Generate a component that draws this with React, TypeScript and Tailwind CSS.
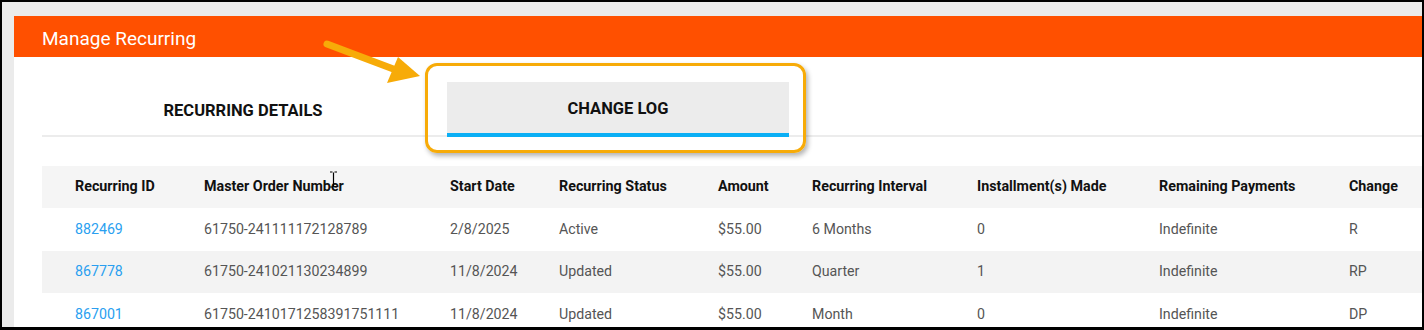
import React from 'react';

type Row = {
  id: string;
  order: string;
  start: string;
  status: string;
  amount: string;
  interval: string;
  made: string;
  remaining: string;
  change: string;
};

const COLUMNS = [
  'Recurring ID',
  'Master Order Number',
  'Start Date',
  'Recurring Status',
  'Amount',
  'Recurring Interval',
  'Installment(s) Made',
  'Remaining Payments',
  'Change',
];

const ROWS: Row[] = [
  {
    id: '882469',
    order: '61750-241111172128789',
    start: '2/8/2025',
    status: 'Active',
    amount: '$55.00',
    interval: '6 Months',
    made: '0',
    remaining: 'Indefinite',
    change: 'R',
  },
  {
    id: '867778',
    order: '61750-241021130234899',
    start: '11/8/2024',
    status: 'Updated',
    amount: '$55.00',
    interval: 'Quarter',
    made: '1',
    remaining: 'Indefinite',
    change: 'RP',
  },
  {
    id: '867001',
    order: '61750-2410171258391751111',
    start: '11/8/2024',
    status: 'Updated',
    amount: '$55.00',
    interval: 'Month',
    made: '0',
    remaining: 'Indefinite',
    change: 'DP',
  },
];

const GRID =
  'grid grid-cols-[129px_246px_109px_159px_94px_165px_182px_190px_1fr] items-center pl-[33px]';

export default function App() {
  return (
    <div
      className="relative w-[1424px] h-[330px] overflow-hidden bg-black pt-[2px] pl-[2px] pr-[2px] pb-[3px]"
      style={{ fontFamily: 'Roboto, "Liberation Sans", sans-serif' }}
    >
      <div className="h-full overflow-hidden bg-[#ebebeb] pt-[14px] pl-[12px]">
        <div className="h-full bg-white flex flex-col">
          {/* header bar */}
          <div className="h-[41px] shrink-0 bg-[#ff5000] flex items-center pl-[28px] pt-[3px]">
            <h1 className="text-white text-[19px] leading-none">Manage Recurring</h1>
          </div>

          <div className="pl-[28px] flex-1 flex flex-col">
            {/* tabs */}
            <div className="flex items-end gap-[33px] pl-[30px] pt-[25px] border-b-2 border-[#ececec]">
              <div className="w-[342px] h-[53px] pt-[5px] flex items-center justify-center text-[16.5px] font-bold text-[#111] uppercase">
                Recurring Details
              </div>
              <div className="w-[342px] h-[55px] -mb-[2px] pt-[3px] bg-[#ececec] border-b-4 border-[#0aaff5] flex items-center justify-center text-[16.5px] font-bold text-[#111] uppercase">
                Change Log
              </div>
            </div>

            {/* table */}
            <div className="mt-[29px]">
              <div className={`${GRID} h-[42px] bg-[#f5f5f5] text-[14.3px] font-bold text-[#111]`}>
                {COLUMNS.map((c) => (
                  <div key={c} className="whitespace-nowrap">
                    {c}
                  </div>
                ))}
              </div>
              {ROWS.map((r, i) => (
                <div
                  key={r.id}
                  className={`${GRID} h-[42.5px] text-[14.2px] text-[#555] ${i % 2 === 1 ? 'bg-[#f3f3f3]' : 'bg-white'}`}
                >
                  <div className="text-[#2a9ff0]">{r.id}</div>
                  <div className="whitespace-nowrap">{r.order}</div>
                  <div>{r.start}</div>
                  <div>{r.status}</div>
                  <div>{r.amount}</div>
                  <div>{r.interval}</div>
                  <div>{r.made}</div>
                  <div>{r.remaining}</div>
                  <div>{r.change}</div>
                </div>
              ))}
            </div>
          </div>
        </div>
      </div>

      {/* annotation: highlight box */}
      <div className="absolute left-[425px] top-[63px] w-[381px] h-[90px] rounded-[12px] border-[3px] border-[#f7ab08] shadow-[2px_3px_5px_rgba(0,0,0,0.3)]" />

      {/* annotation: arrow */}
      <svg className="absolute left-[300px] top-[30px]" width="140" height="70" viewBox="0 0 140 70">
        <line x1="27" y1="14" x2="96" y2="40" stroke="#f7ab08" strokeWidth="7" strokeLinecap="round" />
        <polygon points="98,27 87,53 120,46" fill="#f7ab08" />
      </svg>

      {/* mouse cursor */}
      <svg className="absolute left-[329px] top-[171px]" width="9" height="17" viewBox="0 0 9 17">
        <path d="M1 1h2.5M5.5 1H8M4.5 1.5v14M1 16h2.5M5.5 16H8" stroke="#000" strokeWidth="1.2" fill="none" />
      </svg>
    </div>
  );
}
